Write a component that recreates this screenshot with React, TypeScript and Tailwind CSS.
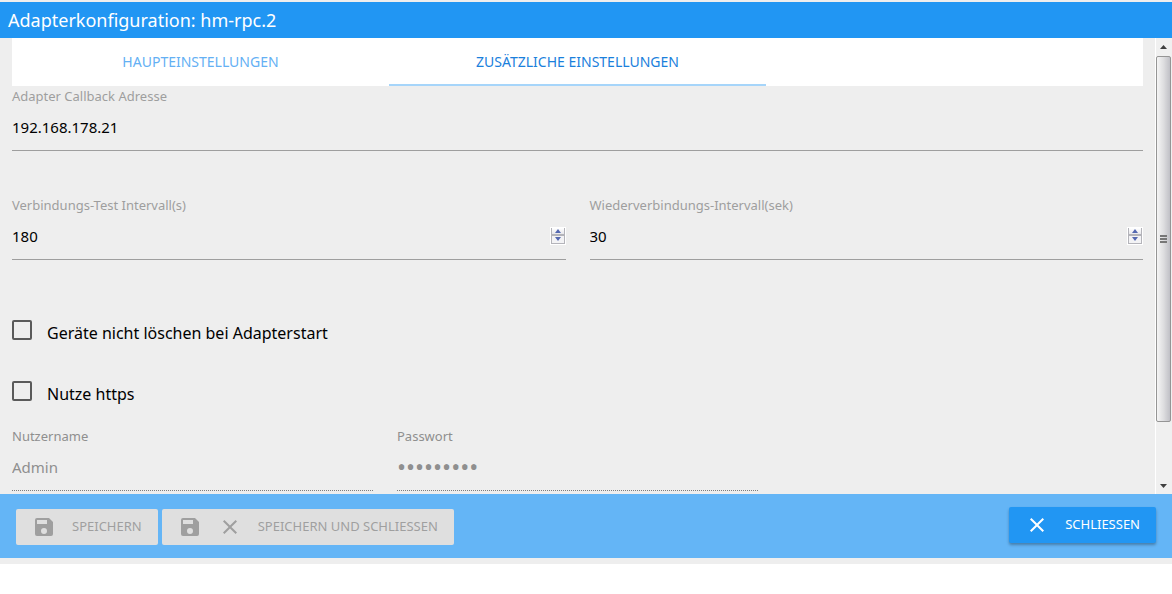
import { useState } from "react";
import type { ReactNode } from "react";
import clsx from "clsx";

const tabs = ["Haupteinstellungen", "Zusätzliche Einstellungen"];

function SaveIcon() {
  return (
    <svg viewBox="0 0 24 24" className="size-6 fill-current" aria-hidden="true">
      <path d="M17 3H5a2 2 0 0 0-2 2v14a2 2 0 0 0 2 2h14a2 2 0 0 0 2-2V7l-4-4zm-5 16a3 3 0 1 1 0-6 3 3 0 0 1 0 6zm3-10H5V5h10v4z" />
    </svg>
  );
}

function CloseIcon() {
  return (
    <svg viewBox="0 0 24 24" className="size-6 fill-current" aria-hidden="true">
      <path d="M19 6.41 17.59 5 12 10.59 6.41 5 5 6.41 10.59 12 5 17.59 6.41 19 12 13.41 17.59 19 19 17.59 13.41 12z" />
    </svg>
  );
}

interface FieldProps {
  id: string;
  label: string;
  value: string;
  type?: string;
  disabled?: boolean;
}

function Field({ id, label, value, type = "text", disabled }: FieldProps) {
  const [current, setCurrent] = useState(value);
  const step = (by: number) => setCurrent(String(Number(current) + by));

  return (
    <div className="min-w-0">
      <label
        htmlFor={id}
        className={clsx("block text-[13px] leading-5", disabled ? "text-[#8f8f8f]" : "text-[#9e9e9e]")}
      >
        {label}
      </label>
      <div
        className={clsx(
          "flex h-[45px] items-center border-b pb-[3px]",
          disabled ? "border-dotted border-[#7d7d7d]" : "border-[#9e9e9e]"
        )}
      >
        <input
          id={id}
          type={type}
          value={current}
          disabled={disabled}
          onChange={(e) => setCurrent(e.target.value)}
          className={clsx(
            "h-full min-w-0 flex-1 appearance-none bg-transparent outline-none [-moz-appearance:textfield] [&::-webkit-inner-spin-button]:appearance-none",
            type === "password" ? "text-2xl" : "text-[15px]",
            disabled ? "text-[#8f8f8f]" : "text-black"
          )}
        />
        {type === "number" && (
          <div className="flex h-[18px] w-4 flex-col border border-white bg-white">
            <button
              type="button"
              aria-label="Erhöhen"
              onClick={() => step(1)}
              className="flex flex-1 items-center justify-center border-x border-b border-[#b4b4ba] bg-linear-to-b from-white to-[#e8e8ec]"
            >
              <svg viewBox="0 0 6 4" className="h-1 w-1.5 fill-[#5468b0]">
                <path d="M3 0 6 4H0z" />
              </svg>
            </button>
            <button
              type="button"
              aria-label="Verringern"
              onClick={() => step(-1)}
              className="flex flex-1 items-center justify-center border border-[#b4b4ba] bg-[#f3f3f5]"
            >
              <svg viewBox="0 0 6 4" className="h-1 w-1.5 fill-[#5468b0]">
                <path d="M0 0h6L3 4z" />
              </svg>
            </button>
          </div>
        )}
      </div>
    </div>
  );
}

function Checkbox({ label }: { label: string }) {
  return (
    <label className="flex h-[25px] gap-[15px] text-base text-black">
      <input
        type="checkbox"
        className="size-5 shrink-0 appearance-none rounded-[2px] border-2 border-[#5a5a5a] checked:bg-[#2196f3]"
      />
      <span className="leading-[26px]">{label}</span>
    </label>
  );
}

function FooterButton({ primary, children }: { primary?: boolean; children: ReactNode }) {
  return (
    <button
      type="button"
      disabled={!primary}
      className={clsx(
        "flex h-9 items-center gap-4 rounded-[2px] px-4 text-[13px] uppercase",
        primary
          ? "bg-[#2196f3] text-white shadow-[0_2px_3px_rgba(0,0,0,0.3)]"
          : "bg-[#dfdfdf] text-[#9f9f9f]"
      )}
    >
      {children}
    </button>
  );
}

/* Classic grey scrollbar with arrows and a grip */
function Scrollbar() {
  return (
    <div
      className="flex w-[17px] shrink-0 flex-col items-center border-l border-white bg-[#f0f0f0] pr-px"
      aria-hidden="true"
    >
      <svg viewBox="0 0 7 4" className="my-[7px] h-1 w-[7px] shrink-0 fill-[#404040]">
        <path d="M3.500 0 7 4H0z" />
      </svg>
      <div className="flex w-full flex-[371] flex-col items-center justify-center gap-px rounded-[2px] border border-[#959595] bg-linear-to-r from-[#f5f5f5] via-[#dedee0] to-[#c0c0c6]">
        <i className="h-0.5 w-[7px] bg-[#777]" />
        <i className="h-0.5 w-[7px] bg-[#777]" />
        <i className="h-0.5 w-[7px] bg-[#777]" />
      </div>
      <div className="flex flex-[67] items-end pb-1.5">
        <svg viewBox="0 0 7 4" className="h-1 w-[7px] fill-[#404040]">
          <path d="M0 0h7L3.500 4z" />
        </svg>
      </div>
    </div>
  );
}

export default function App() {
  const [active, setActive] = useState(1);

  return (
    <div className="h-screen bg-white pb-[30px] font-['Noto_Sans','Open_Sans',sans-serif]">
      <div className="flex h-full flex-col bg-[#eee] pt-0.5 pb-1.5">
        <header className="shrink-0 bg-[#2196f3] px-2 text-white">
          <h1 className="text-lg leading-9">Adapterkonfiguration: hm-rpc.2</h1>
        </header>

        <div className="flex min-h-0 flex-1">
          <main className="min-w-0 flex-1 overflow-hidden px-3">
            {/* Tabs */}
            <nav className="grid h-12 grid-cols-3 bg-white">
              {tabs.map((tab, i) => (
                <button
                  key={tab}
                  type="button"
                  onClick={() => setActive(i)}
                  className={clsx(
                    "border-b-2 pt-0.5 text-sm uppercase",
                    i === active ? "border-[#a6d5fa] text-[#1a80dc]" : "border-transparent text-[#64b0f4]"
                  )}
                >
                  {tab}
                </button>
              ))}
            </nav>

            <Field id="callback" label="Adapter Callback Adresse" value="192.168.178.21" />

            <div className="mt-11 grid grid-cols-2 gap-6">
              <Field id="check" label="Verbindungs-Test Intervall(s)" value="180" type="number" />
              <Field id="reconnect" label="Wiederverbindungs-Intervall(sek)" value="30" type="number" />
            </div>

            <div className="mt-[60px] flex flex-col gap-9">
              <Checkbox label="Geräte nicht löschen bei Adapterstart" />
              <Checkbox label="Nutze https" />
            </div>

            <div className="mt-5 grid grid-cols-3 gap-6">
              <Field id="user" label="Nutzername" value="Admin" disabled />
              <Field id="password" label="Passwort" value="geheim123" type="password" disabled />
            </div>
          </main>
          <Scrollbar />
        </div>

        <footer className="flex h-16 shrink-0 items-center gap-1 bg-[#64b5f6] px-4 pt-0.5">
          <FooterButton>
            <SaveIcon />
            Speichern
          </FooterButton>
          <FooterButton>
            <SaveIcon />
            <CloseIcon />
            Speichern und schliessen
          </FooterButton>
          <div className="ml-auto pb-1">
            <FooterButton primary>
              <CloseIcon />
              Schliessen
            </FooterButton>
          </div>
        </footer>
      </div>
    </div>
  );
}
